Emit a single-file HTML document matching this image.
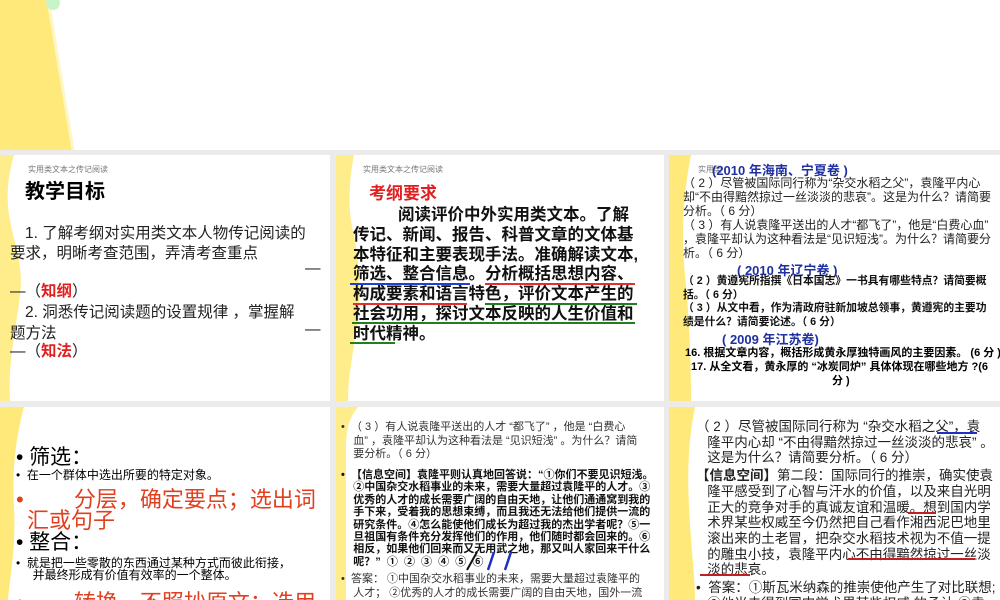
<!DOCTYPE html>
<html><head><meta charset="utf-8"><style>
*{margin:0;padding:0}
body{width:1000px;height:600px;overflow:hidden;background:#ebebeb;position:relative;font-family:"Liberation Sans","Noto Sans CJK SC",sans-serif}
.s{position:absolute;background:#fff;overflow:hidden}
.s svg.w{position:absolute;left:0;top:0}
.l{position:absolute;white-space:nowrap;color:#000}
.h{font-size:8px;color:#777}
.u{position:absolute;height:2px}
</style></head><body>
<!-- top slide -->
<div class="s" style="left:0;top:0;width:1000px;height:150px">
<svg class="w" width="100" height="150"><path d="M0 0H48L73 150H0Z" fill="#ffe97a"/><path d="M48 0L73 150" stroke="#fff6c4" stroke-width="3"/><ellipse cx="53" cy="3" rx="7" ry="7" fill="#c8f5c8"/></svg>
</div>
<!-- slide 1 -->
<div class="s" style="left:0;top:155px;width:330px;height:246px">
<svg class="w" width="40" height="246"><path d="M0 0H14C8 20 6 40 9 60C14 90 24 110 20 140C16 175 8 205 10 246H0Z" fill="#ffec8a"/></svg>
<div class="l h" style="left:28px;top:9px">实用类文本之传记阅读</div>
<div class="l" style="left:25px;top:20px;font-size:20px;font-weight:bold">教学目标</div>
<div class="l" style="left:25px;top:66px;font-size:15.5px;color:#222">1. 了解考纲对实用类文本人物传记阅读的</div>
<div class="l" style="left:10px;top:86px;font-size:15.5px;color:#222">要求，明晰考查范围，弄清考查重点</div>
<div class="l" style="left:305px;top:105px;font-size:15.5px;color:#222">—</div>
<div class="l" style="left:10px;top:124px;font-size:15.5px;color:#222">—（<b style="color:#e02020">知纲</b>）</div>
<div class="l" style="left:25px;top:145px;font-size:15.5px;color:#222">2. 洞悉传记阅读题的设置规律 ，掌握解</div>
<div class="l" style="left:10px;top:166px;font-size:15.5px;color:#222">题方法</div>
<div class="l" style="left:305px;top:166px;font-size:15.5px;color:#222">—</div>
<div class="l" style="left:10px;top:184px;font-size:15.5px;color:#222">—（<b style="color:#e02020">知法</b>）</div>
</div>
<!-- slide 2 -->
<div class="s" style="left:336px;top:155px;width:328px;height:246px">
<svg class="w" width="40" height="246"><path d="M0 0H18C12 30 12 60 18 80C24 110 26 150 18 190C14 215 12 230 12 246H0Z" fill="#ffec8a"/></svg>
<div class="l h" style="left:27px;top:9px">实用类文本之传记阅读</div>
<div class="l" style="left:33px;top:24px;font-size:17px;font-weight:bold;color:#e02020">考纲要求</div>
<div style="position:absolute;left:17px;top:51px;font-size:16.5px;line-height:19.8px;font-weight:bold;color:#111;white-space:nowrap">
<div style="padding-left:45px">阅读评价中外实用类文本。了解</div><div>传记、新闻、报告、科普文章的文体基</div><div>本特征和主要表现手法。准确解读文本,</div><div>筛选、整合信息。分析概括思想内容、</div><div>构成要素和语言特色，评价文本产生的</div><div>社会功用，探讨文本反映的人生价值和</div><div>时代精神。</div></div>
<div class="u" style="left:14px;top:128px;width:120px;background:#2040d0"></div>
<div class="u" style="left:149px;top:128px;width:150px;background:#e03030"></div>
<div class="u" style="left:17px;top:148px;width:114px;background:#e03030"></div>
<div class="u" style="left:149px;top:148px;width:152px;background:#208020"></div>
<div class="u" style="left:16px;top:167px;width:283px;background:#208020"></div>
<div class="u" style="left:14px;top:187px;width:45px;background:#208020"></div>
</div>
<!-- slide 3 -->
<div class="s" style="left:669px;top:155px;width:331px;height:246px">
<svg class="w" width="40" height="246"><path d="M0 0H22C14 40 12 80 16 120C20 160 22 200 22 246H0Z" fill="#ffe97a"/></svg>
<div class="l h" style="left:29px;top:9px">实用类</div>
<div class="l" style="left:43px;top:5px;font-size:13px;font-weight:bold;color:#2030a0">(2010 年海南、宁夏卷 )</div>
<div style="position:absolute;left:14px;top:22px;font-size:12px;line-height:13.9px;color:#222;white-space:nowrap">
<div>（ 2 ）尽管被国际同行称为“杂交水稻之父”，袁隆平内心</div><div>却“不由得黯然掠过一丝淡淡的悲哀”。这是为什么？请简要</div><div>分析。（ 6 分）</div><div>（ 3 ）有人说袁隆平送出的人才“都飞了”，他是“白费心血”</div><div>，袁隆平却认为这种看法是“见识短浅”。为什么？请简要分</div><div>析。（ 6 分）</div></div>
<div class="l" style="left:68px;top:105px;font-size:13px;font-weight:bold;color:#2030a0">( 2010 年辽宁卷 )</div>
<div style="position:absolute;left:14px;top:120px;font-size:10.8px;line-height:13.7px;font-weight:bold;color:#111;white-space:nowrap">
<div>（ 2 ）黄遵宪所指撰《日本国志》一书具有哪些特点？请简要概</div><div>括。（ 6 分）</div><div>（ 3 ）从文中看，作为清政府驻新加坡总领事，黄遵宪的主要功</div><div>绩是什么？请简要论述。（ 6 分）</div></div>
<div class="l" style="left:53px;top:174px;font-size:13px;font-weight:bold;color:#2030a0">( 2009 年江苏卷)</div>
<div class="l" style="left:16px;top:189px;font-size:11px;font-weight:bold">16. 根据文章内容，概括形成黄永厚独特画风的主要因素。 (6 分 )</div>
<div class="l" style="left:22px;top:203px;font-size:11px;font-weight:bold">17. 从全文看，黄永厚的 “冰炭同炉” 具体体现在哪些地方 ?(6</div>
<div class="l" style="left:163px;top:217px;font-size:11px;font-weight:bold">分 )</div>
</div>
<!-- slide 4 -->
<div class="s" style="left:0;top:407px;width:330px;height:193px">
<svg class="w" width="40" height="193"><path d="M0 0H24C16 30 12 60 14 100C16 140 10 170 8 193H0Z" fill="#ffe97a"/></svg>
<div class="l" style="left:16px;top:34px;font-size:21px">• 筛选：</div>
<div class="l" style="left:16px;top:59px;font-size:12px">•&nbsp; 在一个群体中选出所要的特定对象。</div>
<div class="l" style="left:16px;top:75px;font-size:22px;color:#e04020">•&nbsp;　　分层，确定要点；选出词</div>
<div class="l" style="left:27px;top:96px;font-size:22px;color:#e04020">汇或句子</div>
<div class="l" style="left:16px;top:119px;font-size:21px">• 整合：</div>
<div class="l" style="left:16px;top:150px;font-size:12px;line-height:12px">•&nbsp; 就是把一些零散的东西通过某种方式而彼此衔接，<br>&nbsp;&nbsp;&nbsp;&nbsp; 并最终形成有价值有效率的一个整体。</div>
<div class="l" style="left:16px;top:178px;font-size:22px;color:#e04020">•&nbsp;　　转换，不照抄原文；选用</div>
</div>
<!-- slide 5 -->
<div class="s" style="left:336px;top:407px;width:328px;height:193px">
<svg class="w" width="40" height="193"><path d="M0 0H22C14 10 10 20 10 40V193H0Z" fill="#ffec8a"/></svg>
<div style="position:absolute;left:5px;top:14px;font-size:11px;line-height:13.5px;color:#333;white-space:nowrap">
<div>•&nbsp;&nbsp;（ 3 ）有人说袁隆平送出的人才 “都飞了” ，他是 “白费心</div><div>&nbsp;&nbsp;&nbsp;&nbsp;血” ，袁隆平却认为这种看法是 “见识短浅” 。为什么？请简</div><div>&nbsp;&nbsp;&nbsp;&nbsp;要分析。（ 6 分）</div></div>
<div style="position:absolute;left:5px;top:62px;font-size:11px;line-height:12.4px;font-weight:bold;color:#111;white-space:nowrap">
<div>•&nbsp;&nbsp;【信息空间】袁隆平则认真地回答说：“①你们不要见识短浅。</div><div>&nbsp;&nbsp;&nbsp;&nbsp;②中国杂交水稻事业的未来，需要大量超过袁隆平的人才。③</div><div>&nbsp;&nbsp;&nbsp;&nbsp;优秀的人才的成长需要广阔的自由天地，让他们通通窝到我的</div><div>&nbsp;&nbsp;&nbsp;&nbsp;手下来，受着我的思想束缚，而且我还无法给他们提供一流的</div><div>&nbsp;&nbsp;&nbsp;&nbsp;研究条件。④怎么能使他们成长为超过我的杰出学者呢？⑤一</div><div>&nbsp;&nbsp;&nbsp;&nbsp;旦祖国有条件充分发挥他们的作用，他们随时都会回来的。⑥</div><div>&nbsp;&nbsp;&nbsp;&nbsp;相反，如果他们回来而又无用武之地，那又叫人家回来干什么</div><div>&nbsp;&nbsp;&nbsp;&nbsp;呢？” &nbsp;① &nbsp;② &nbsp;③ &nbsp;④ &nbsp;⑤ &nbsp;⑥</div></div>
<svg style="position:absolute;left:0;top:0" width="328" height="193"><path d="M141 145L131 163" stroke="#111" stroke-width="2"/><path d="M158 145L152 163M175 145L169 163" stroke="#2030c0" stroke-width="2.5"/></svg>
<div style="position:absolute;left:5px;top:166px;font-size:11px;line-height:13.5px;color:#333;white-space:nowrap">
<div>•&nbsp;&nbsp;答案： ①中国杂交水稻事业的未来，需要大量超过袁隆平的</div><div>&nbsp;&nbsp;&nbsp;&nbsp;人才； ②优秀的人才的成长需要广阔的自由天地，国外一流</div></div>
</div>
<!-- slide 6 -->
<div class="s" style="left:669px;top:407px;width:331px;height:193px">
<svg class="w" width="40" height="193"><path d="M0 0H26C20 30 18 60 20 100C22 140 26 170 26 193H0Z" fill="#ffe97a"/></svg>
<div style="position:absolute;left:27px;top:12px;font-size:13.5px;line-height:15.7px;color:#222;white-space:nowrap">
<div>（ 2 ）尽管被国际同行称为 “杂交水稻之父”，袁</div><div>&nbsp;&nbsp;&nbsp;隆平内心却 “不由得黯然掠过一丝淡淡的悲哀” 。</div><div>&nbsp;&nbsp;&nbsp;这是为什么？请简要分析。（ 6 分）</div>
<div style="margin-top:2px"><b>【信息空间】</b>第二段：国际同行的推崇，确实使袁</div><div>&nbsp;&nbsp;&nbsp;隆平感受到了心智与汗水的价值，以及来自光明</div><div>&nbsp;&nbsp;&nbsp;正大的竞争对手的真诚友谊和温暖。想到国内学</div><div>&nbsp;&nbsp;&nbsp;术界某些权威至今仍然把自己看作湘西泥巴地里</div><div>&nbsp;&nbsp;&nbsp;滚出来的土老冒，把杂交水稻技术视为不值一提</div><div>&nbsp;&nbsp;&nbsp;的雕虫小技，袁隆平内心不由得黯然掠过一丝淡</div><div>&nbsp;&nbsp;&nbsp;淡的悲哀。</div>
<div style="margin-top:2px">•&nbsp; 答案：①斯瓦米纳森的推崇使他产生了对比联想;</div><div>&nbsp;&nbsp;&nbsp;②他当未得到国内学术界某些权威 的承认 ③袁</div></div>
<div class="u" style="left:268px;top:25px;width:40px;background:#2030c0"></div>
<div class="u" style="left:239px;top:105px;width:28px;background:#c02020"></div>
<div class="u" style="left:179px;top:151px;width:127px;background:#c02020"></div>
<div class="u" style="left:31px;top:167px;width:50px;background:#c02020"></div>
</div>
</body></html>
